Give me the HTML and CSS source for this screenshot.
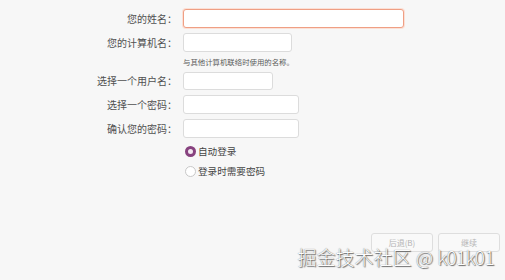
FILE: index.html
```html
<!DOCTYPE html>
<html lang="zh-CN">
<head>
    <meta charset="UTF-8">
    <title>用户信息</title>
    <link rel="stylesheet" href="styles.css">
</head>
<body>
    <div class="page">
        <div class="form">
            <div class="row row-first">
                <label class="label">您的姓名：</label>
                <input class="input input-focus w-name" type="text">
            </div>
            <div class="row">
                <label class="label">您的计算机名：</label>
                <input class="input w-host" type="text">
            </div>
            <div class="hint">与其他计算机联络时使用的名称。</div>
            <div class="row row-user">
                <label class="label">选择一个用户名：</label>
                <input class="input w-user" type="text">
            </div>
            <div class="row">
                <label class="label">选择一个密码：</label>
                <input class="input w-pass" type="password">
            </div>
            <div class="row">
                <label class="label">确认您的密码：</label>
                <input class="input w-pass" type="password">
            </div>
            <div class="radio-row radio-first">
                <span class="radio checked"></span>
                <span class="radio-text">自动登录</span>
            </div>
            <div class="radio-row">
                <span class="radio"></span>
                <span class="radio-text">登录时需要密码</span>
            </div>
        </div>
        <div class="footer">
            <button class="btn">后退(B)</button>
            <button class="btn">继续</button>
        </div>
    </div>
    <div class="watermark">掘金技术社区 @ <span class="wm-id">k01k01</span></div>
</body>
</html>
```

FILE: styles.css
```css
body {
    margin: 0;
    background-color: #f7f7f7;
    font-family: "Noto Sans CJK SC", "Noto Sans", sans-serif;
    color: #505050;
}
.page {
    height: 280px;
    display: flex;
    flex-direction: column;
}
.row {
    display: flex;
    align-items: center;
    gap: 6px;
    margin-top: 5px;
}
.row-first {
    margin-top: 9px;
}
.label {
    width: 177px;
    text-align: right;
    font-size: 10px;
    line-height: 12px;
}
.input {
    box-sizing: border-box;
    height: 19px;
    margin: 0;
    padding: 0 4px;
    background: #fff;
    border: 1px solid #dcdcdc;
    border-radius: 3px;
    outline: none;
}
.input.input-focus {
    border: 1px solid #ef9f84;
    box-shadow: 0 0 0 1px #fbe0d6;
}
.w-name { width: 221px; }
.w-host { width: 109px; }
.w-user { width: 90px; height: 18px; }
.w-pass { width: 116px; }
.hint {
    margin: 5px 0 0 183px;
    font-size: 7.4px;
    line-height: 10px;
    color: #5a5a5a;
}
.radio-row {
    display: flex;
    align-items: center;
    height: 14px;
    margin: 6px 0 0 185px;
    gap: 2px;
}
.radio {
    box-sizing: border-box;
    width: 11px;
    height: 11px;
    border-radius: 50%;
    border: 1px solid #c8c8c8;
    background: #fff;
}
.radio.checked {
    border: 3px solid #87427f;
    background: #f3e8f1;
}
.radio-text {
    font-size: 9.6px;
    line-height: 12px;
    color: #444;
}
.footer {
    margin-top: auto;
    margin-bottom: 28px;
    display: flex;
    justify-content: flex-end;
    gap: 5px;
    padding-right: 5px;
}
.btn {
    box-sizing: border-box;
    width: 62px;
    height: 19px;
    padding: 0;
    background: #f9f9f9;
    border: 1px solid #dedede;
    border-radius: 3px;
    font-family: inherit;
    font-size: 8px;
    color: #b4b4b4;
}
.watermark {
    position: absolute;
    right: 11px;
    bottom: 12px;
    font-size: 19px;
    font-weight: 300;
    line-height: 22px;
    color: #fdfdfd;
    text-shadow: 1px 1px 1px rgba(0, 0, 0, 0.55), 0 0 1px #666;
}
.wm-id {
    letter-spacing: -0.6px;
}
```
